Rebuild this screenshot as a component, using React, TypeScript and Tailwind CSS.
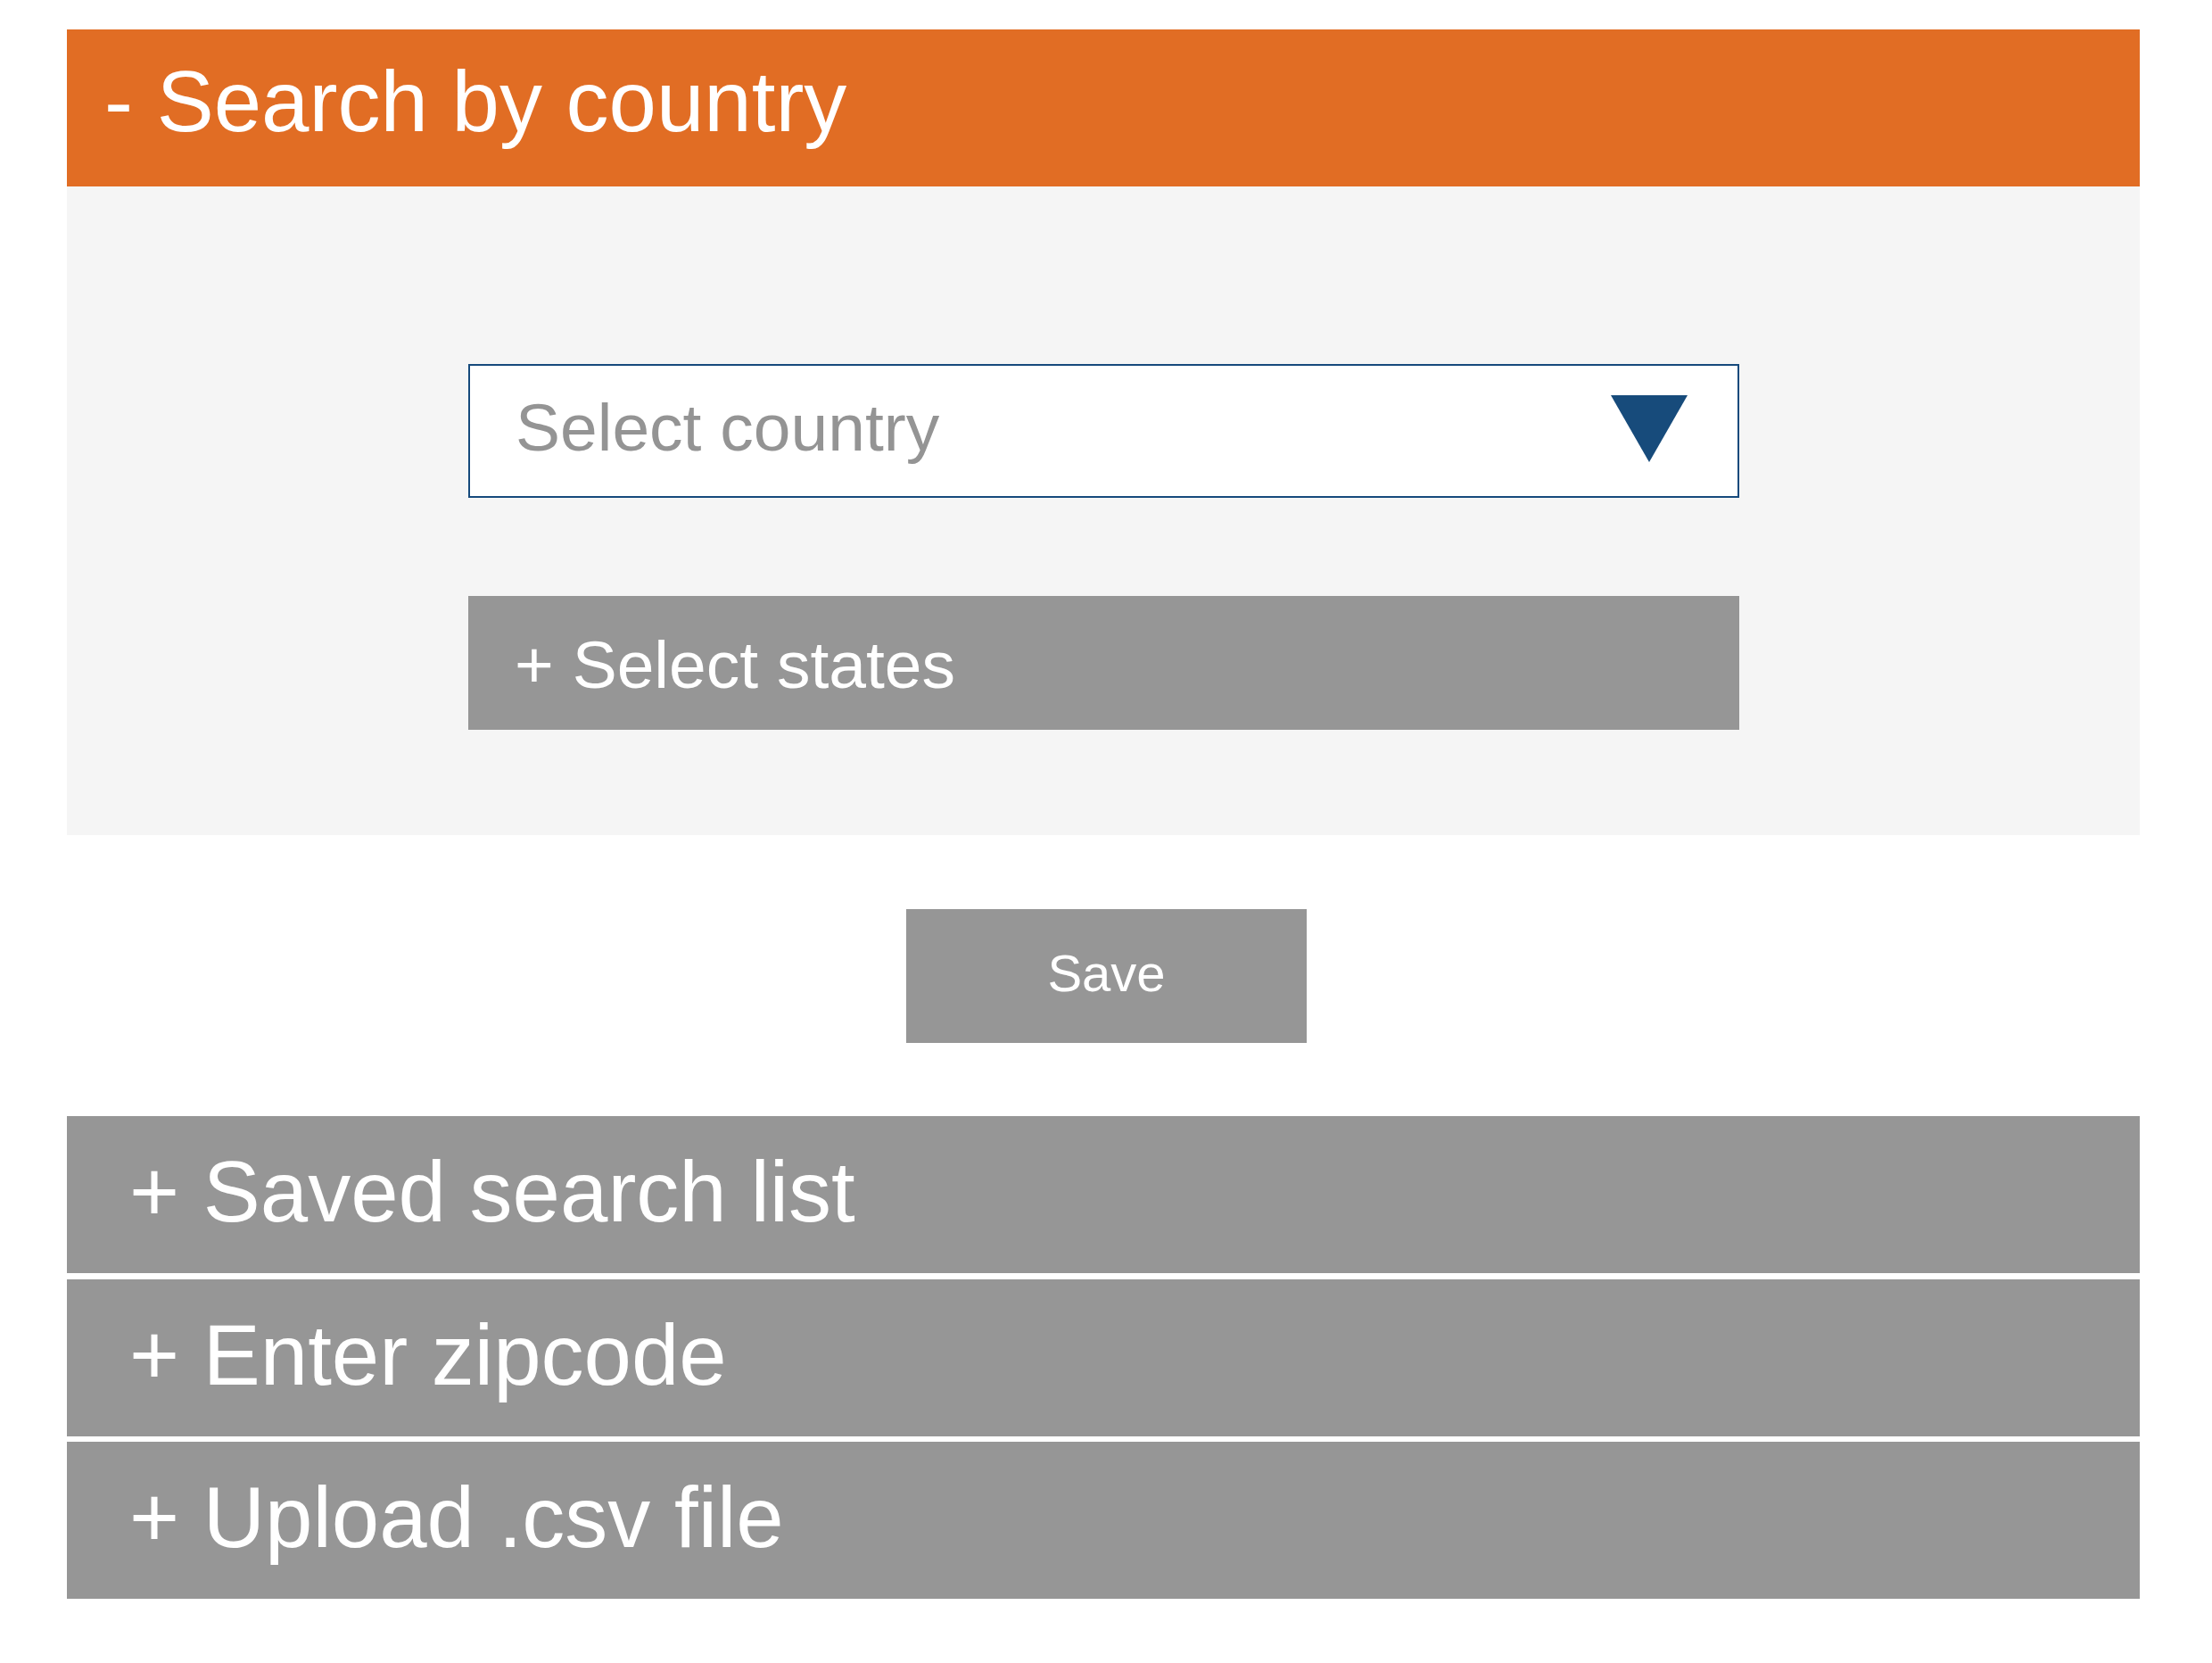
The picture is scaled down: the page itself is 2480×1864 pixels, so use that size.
import React from "react";

const font = { fontFamily: '"Liberation Sans", Arial, Helvetica, sans-serif' };

function ListRow({ label }: { label: string }) {
  return (
    <div className="h-[176px] bg-[#969696] pl-[70px] pt-[37px] text-[96px] leading-[96px] text-white whitespace-pre">
      {label}
    </div>
  );
}

export default function App() {
  return (
    <div className="w-[2480px] h-[1864px] bg-white pt-[33px] pl-[75px]" style={font}>
      <div className="w-[2324px]">
        <div className="h-[176px] bg-[#e16d24] pl-[42px] pt-[33px] text-[96px] leading-[96px] text-white whitespace-pre">
          - Search by country
        </div>
        <div className="h-[727px] bg-[#f5f5f5] pl-[450px] pt-[199px]">
          <div className="w-[1425px] h-[150px] border-2 border-[#164a7c] bg-white flex items-start justify-between">
            <div className="ml-[51px] mt-[32px] text-[75px] leading-[75px] text-[#949494]">
              Select country
            </div>
            <svg className="mt-[33px] mr-[56px]" width="86" height="75" viewBox="0 0 86 75">
              <polygon points="0,0 86,0 43,75" fill="#174b7b" />
            </svg>
          </div>
          <div className="mt-[110px] w-[1425px] h-[150px] bg-[#969696] pl-[52px] pt-[40px] text-[75px] leading-[75px] text-white whitespace-pre">
            + Select states
          </div>
        </div>
        <div className="mt-[83px] ml-[941px] w-[449px] h-[150px] bg-[#969696] pt-[43px] text-center text-[58px] leading-[58px] text-white">
          Save
        </div>
        <div className="mt-[82px] flex flex-col gap-[6.5px]">
          <ListRow label="+ Saved search list" />
          <ListRow label="+ Enter zipcode" />
          <ListRow label="+ Upload .csv file" />
        </div>
      </div>
    </div>
  );
}
